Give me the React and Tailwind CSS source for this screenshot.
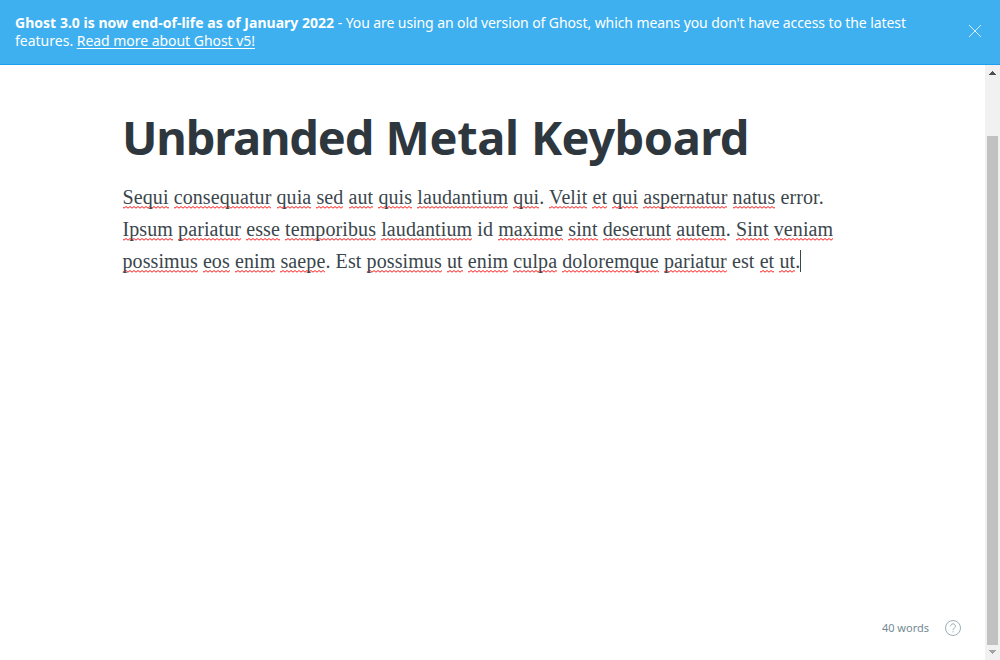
import React from 'react';

const LINES = [
  '*Sequi *consequatur *quia *sed *aut *quis *laudantium *qui . *Velit *et *qui *aspernatur *natus error.',
  '*Ipsum *pariatur *esse *temporibus *laudantium id *maxime *sint *deserunt *autem . *Sint *veniam',
  '*possimus *eos *enim *saepe . Est *possimus *ut *enim *culpa *doloremque *pariatur est *et *ut .',
];

function Line({ text }) {
  return text.split(' ').map((word, i) => {
    const gap = i > 0 && word !== '.' ? ' ' : '';
    return (
      <React.Fragment key={i}>
        {gap}
        {word.startsWith('*') ? (
          <span className="bg-[url('data:image/svg+xml,%3Csvg%20xmlns=%22http://www.w3.org/2000/svg%22%20width=%224%22%20height=%223%22%3E%3Cpath%20d=%22M-1%200.5L1%202.2L3%200.5L5%202.2%22%20fill=%22none%22%20stroke=%22%23ff1c1c%22%20stroke-width=%221%22/%3E%3C/svg%3E')] bg-[position:0_bottom] bg-repeat-x pb-px">
            {word.slice(1)}
          </span>
        ) : (
          word
        )}
      </React.Fragment>
    );
  });
}

function Banner() {
  return (
    <header className="flex h-[65px] shrink-0 justify-between border-b border-[#1a9eed] bg-[#3eb0ef] pl-[15px] pr-[19px] text-white">
      <div className="whitespace-nowrap pt-[14px] text-[14px] leading-[18px]">
        <p>
          <b className="tracking-[0.025px]">Ghost 3.0 is now end-of-life as of January 2022</b>
          <span className="tracking-[-0.09px]"> - You are using an old version of Ghost, which means you don't have access to the latest</span>
        </p>
        <p>
          <span>features. </span>
          <a className="tracking-[-0.04px] underline underline-offset-2">Read more about Ghost v5!</a>
        </p>
      </div>
      <svg className="mt-[25px] size-3" viewBox="0 0 12 12" fill="none" stroke="currentColor" strokeWidth="0.8">
        <path d="M0 0l12 12M12 0L0 12" />
      </svg>
    </header>
  );
}

function Scrollbar() {
  return (
    <div className="flex w-[15px] shrink-0 flex-col items-center bg-[#f1f1f1]">
      <svg className="h-[15px] w-[15px] shrink-0" viewBox="0 0 15 15" fill="#505050" shapeRendering="crispEdges">
        <path d="M4 10h7L7.5 6z" />
      </svg>
      <div className="mt-[56px] h-[509px] w-[11px] shrink-0 bg-[#c1c1c1]" />
      <svg className="h-[15px] w-[15px] shrink-0" viewBox="0 0 15 15" fill="#a3a3a3" shapeRendering="crispEdges">
        <path d="M4 5h7L7.5 9z" />
      </svg>
    </div>
  );
}

export default function App() {
  return (
    <div className="flex h-[660px] w-[1000px] flex-col overflow-hidden bg-white font-['Noto_Sans',sans-serif]">
      <Banner />
      <div className="flex min-h-0 flex-1">
        <main className="flex flex-1 flex-col">
          <h1 className="ml-[122px] mt-[42px] whitespace-nowrap text-[47px] font-bold leading-[60px] text-[#2e373d]">
            <span className="tracking-[-1.2px]">Unbranded</span> <span className="tracking-[-0.35px]">Metal</span>{' '}
            <span className="tracking-[-0.5px]">Keyboard</span>
          </h1>
          <div className="ml-[122.5px] mt-[14px] whitespace-nowrap font-['Liberation_Serif',serif] text-[20px] leading-8 tracking-[0.1px] text-[#3a464c]">
            {LINES.map((text, i) => (
              <p key={i} className="flex items-center">
                <span><Line text={text} /></span>
                {i === 2 && <span className="h-[22px] w-px bg-[#3a464c]" />}
              </p>
            ))}
          </div>
          <footer className="mb-[23px] mr-6 mt-auto flex items-center justify-end gap-4 text-[11px] leading-[18px] text-[#738a94]">
            <span>40 words</span>
            <svg className="size-4" viewBox="0 0 16 16" fill="none" stroke="#9baeb8">
              <circle cx="8" cy="8" r="7.5" />
              <path d="M5.6 6.2a2.4 2.4 0 1 1 3.6 2.1c-.8.5-1.2.9-1.2 1.8M8 11.2v1.2" />
            </svg>
          </footer>
        </main>
        <Scrollbar />
      </div>
    </div>
  );
}
